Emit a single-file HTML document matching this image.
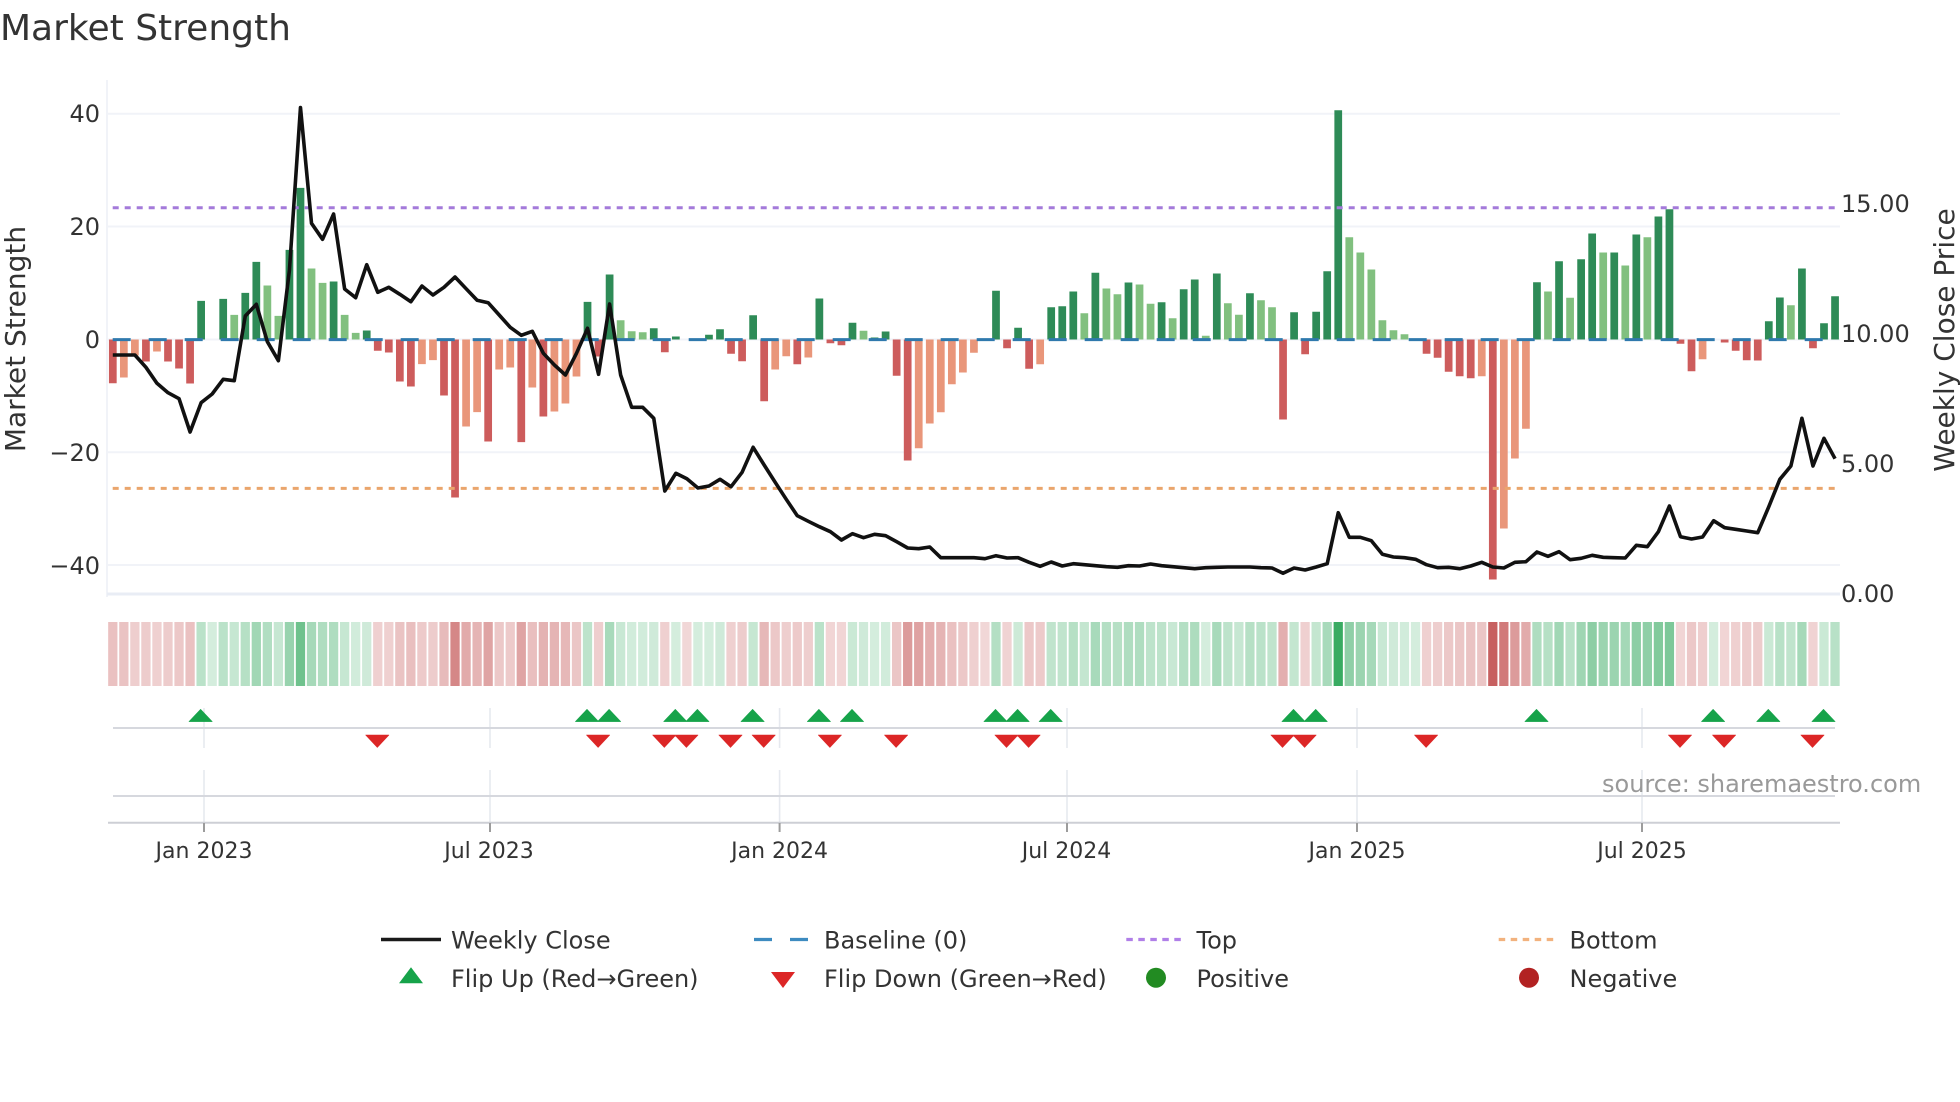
<!DOCTYPE html>
<html lang="en"><head><meta charset="utf-8"><title>Market Strength</title>
<style>
html,body{margin:0;padding:0;background:#fff}
svg{display:block}
text{font-family:"DejaVu Sans","Liberation Sans",sans-serif;fill:#333;font-size:24px}
</style></head><body>
<svg xmlns="http://www.w3.org/2000/svg" width="1960" height="1102" viewBox="0 0 1960 1102">
<rect width="1960" height="1102" fill="#fff"/>
<text x="0" y="40" style="font-size:36px">Market Strength</text>
<!-- grid -->
<g stroke="#f1f3f8" stroke-width="2" fill="none">
<path d="M107 113.7H1840M107 226.5H1840M107 339.5H1840M107 452.3H1840M107 565H1840"/>
<path d="M107 80V597"/>
</g>
<path d="M107 594H1840" stroke="#e9edf5" stroke-width="3"/>
<!-- bars -->
<g transform="translate(108.94 339.5) scale(11.04 1)">
<path fill="#2e8b57" d="M8 0h.7v-38.6h-.7zM10 0h.7v-40.6h-.7zM12 0h.7v-46.6h-.7zM13 0h.7v-77.6h-.7zM16 0h.7v-89.6h-.7zM17 0h.7v-151.6h-.7zM20 0h.7v-58h-.7zM23 0h.7v-9h-.7zM43 0h.7v-37.6h-.7zM45 0h.7v-65h-.7zM49 0h.7v-11.3h-.7zM51 0h.7v-3h-.7zM54 0h.7v-4.7h-.7zM55 0h.7v-10.3h-.7zM58 0h.7v-24.3h-.7zM64 0h.7v-41h-.7zM67 0h.7v-16.7h-.7zM69 0h.7v-2h-.7zM70 0h.7v-8h-.7zM80 0h.7v-48.7h-.7zM82 0h.7v-11.7h-.7zM85 0h.7v-32.3h-.7zM86 0h.7v-33.3h-.7zM87 0h.7v-48h-.7zM89 0h.7v-66.7h-.7zM92 0h.7v-57h-.7zM95 0h.7v-37.3h-.7zM97 0h.7v-50.3h-.7zM98 0h.7v-60h-.7zM100 0h.7v-66h-.7zM103 0h.7v-46.3h-.7zM107 0h.7v-27.3h-.7zM109 0h.7v-27.7h-.7zM110 0h.7v-68.3h-.7zM111 0h.7v-229.3h-.7zM129 0h.7v-57.3h-.7zM131 0h.7v-78.3h-.7zM133 0h.7v-80.3h-.7zM134 0h.7v-106h-.7zM136 0h.7v-87h-.7zM138 0h.7v-105h-.7zM140 0h.7v-123h-.7zM141 0h.7v-130.3h-.7zM150 0h.7v-18.3h-.7zM151 0h.7v-42h-.7zM153 0h.7v-71h-.7zM155 0h.7v-16.3h-.7zM156 0h.7v-43.3h-.7z"/>
<path fill="#81c07f" d="M11 0h.7v-24.6h-.7zM14 0h.7v-54h-.7zM15 0h.7v-23.6h-.7zM18 0h.7v-71h-.7zM19 0h.7v-56.6h-.7zM21 0h.7v-24.6h-.7zM22 0h.7v-6.6h-.7zM46 0h.7v-19.3h-.7zM47 0h.7v-8.3h-.7zM48 0h.7v-7.3h-.7zM68 0h.7v-8.7h-.7zM88 0h.7v-26.3h-.7zM90 0h.7v-51h-.7zM91 0h.7v-45.3h-.7zM93 0h.7v-55h-.7zM94 0h.7v-35.7h-.7zM96 0h.7v-21.3h-.7zM99 0h.7v-3.7h-.7zM101 0h.7v-36.3h-.7zM102 0h.7v-24.7h-.7zM104 0h.7v-39.3h-.7zM105 0h.7v-32.3h-.7zM112 0h.7v-102.3h-.7zM113 0h.7v-87h-.7zM114 0h.7v-70h-.7zM115 0h.7v-19.3h-.7zM116 0h.7v-9.3h-.7zM117 0h.7v-5.3h-.7zM130 0h.7v-48h-.7zM132 0h.7v-41.7h-.7zM135 0h.7v-87h-.7zM137 0h.7v-74h-.7zM139 0h.7v-102.3h-.7zM152 0h.7v-34.3h-.7z"/>
<path fill="#cd5c5c" d="M0 0h.7v43.7h-.7zM3 0h.7v22h-.7zM5 0h.7v22h-.7zM6 0h.7v29h-.7zM7 0h.7v44h-.7zM24 0h.7v11.3h-.7zM25 0h.7v13h-.7zM26 0h.7v42h-.7zM27 0h.7v47h-.7zM30 0h.7v56h-.7zM31 0h.7v158h-.7zM34 0h.7v102h-.7zM37 0h.7v102.6h-.7zM39 0h.7v77h-.7zM44 0h.7v17h-.7zM50 0h.7v12.7h-.7zM56 0h.7v14.3h-.7zM57 0h.7v21.7h-.7zM59 0h.7v61.7h-.7zM62 0h.7v24.7h-.7zM65 0h.7v3.7h-.7zM66 0h.7v5.7h-.7zM71 0h.7v36.3h-.7zM72 0h.7v121h-.7zM81 0h.7v8.7h-.7zM83 0h.7v29.3h-.7zM106 0h.7v80h-.7zM108 0h.7v14.7h-.7zM119 0h.7v14.3h-.7zM120 0h.7v18.3h-.7zM121 0h.7v32.3h-.7zM122 0h.7v36.7h-.7zM123 0h.7v38.7h-.7zM125 0h.7v240h-.7zM142 0h.7v4.3h-.7zM143 0h.7v31.7h-.7zM146 0h.7v3h-.7zM147 0h.7v11.3h-.7zM148 0h.7v20.7h-.7zM149 0h.7v21h-.7zM154 0h.7v8.7h-.7z"/>
<path fill="#e9967a" d="M1 0h.7v38h-.7zM2 0h.7v16h-.7zM4 0h.7v12h-.7zM28 0h.7v24.6h-.7zM29 0h.7v20.6h-.7zM32 0h.7v87h-.7zM33 0h.7v72.6h-.7zM35 0h.7v30h-.7zM36 0h.7v28h-.7zM38 0h.7v48h-.7zM40 0h.7v72h-.7zM41 0h.7v64h-.7zM42 0h.7v37h-.7zM60 0h.7v30h-.7zM61 0h.7v16.7h-.7zM63 0h.7v18h-.7zM73 0h.7v108.7h-.7zM74 0h.7v84h-.7zM75 0h.7v72.7h-.7zM76 0h.7v44.7h-.7zM77 0h.7v33h-.7zM78 0h.7v13.3h-.7zM84 0h.7v24.7h-.7zM124 0h.7v36.7h-.7zM126 0h.7v189h-.7zM127 0h.7v119h-.7zM128 0h.7v89.3h-.7zM144 0h.7v19.7h-.7z"/>
</g>
<!-- dashed lines -->
<path d="M112.7 339.6H1835" stroke="#2f79ad" stroke-width="3" stroke-dasharray="18 18" fill="none"/>
<path d="M112.7 207.7H1835" stroke="#a47ada" stroke-width="3" stroke-dasharray="6 6" fill="none"/>
<path d="M112.7 488.4H1835" stroke="#eaa56c" stroke-width="3" stroke-dasharray="6 6" fill="none"/>
<!-- price -->
<g transform="translate(112.8 0) scale(11.04 1)">
<polyline vector-effect="non-scaling-stroke" fill="none" stroke="#111" stroke-width="3.6" stroke-linejoin="round" points="0,355 1,355 2,355 3,367.3 4,383.3 5,392.7 6,398.7 7,432 8,402.7 9,394 10,379.3 11,380.7 12,316 13,304.3 14,341.7 15,360.7 16,270 17,107.5 18,223.3 19,239.3 20,214 21,289 22,297.7 23,264.7 24,292.3 25,287.3 26,294.3 27,301.7 28,286 29,295 30,287.3 31,277 32,288.7 33,300.3 34,302.7 35,315 36,327.3 37,335.3 38,331.3 39,353.3 40,365 41,375 42,353.3 43,328.3 44,374.3 45,304 46,375 47,407.3 48,407.3 49,418.3 50,491 51,473.3 52,478.7 53,488 54,486 55,479.3 56,486.7 57,472.3 58,447.3 59,465 60,482.3 61,499.3 62,515.7 63,521.3 64,526.7 65,531.7 66,540 67,533.7 68,537.7 69,534.3 70,535.7 71,541.7 72,548 73,548.7 74,547 75,557.7 76,557.7 77,557.7 78,557.7 79,558.7 80,555.7 81,558 82,557.7 83,562.3 84,566.3 85,562 86,566 87,563.7 88,564.7 89,565.7 90,566.7 91,567.3 92,565.7 93,566 94,564 95,565.7 96,566.7 97,567.7 98,568.7 99,567.7 100,567.3 101,567 102,567 103,567 104,567.7 105,568 106,573.3 107,568 108,570 109,567 110,563.7 111,512.7 112,537.3 113,537.3 114,540.7 115,554.3 116,557 117,557.7 118,559.3 119,564.7 120,567.7 121,567.3 122,568.7 123,566 124,562.3 125,567 126,568 127,562.3 128,561.7 129,552 130,556.3 131,551.7 132,559.7 133,558.3 134,555.3 135,557.3 136,557.7 137,558 138,545.3 139,546.7 140,531.7 141,506 142,536.7 143,539 144,537 145,520.7 146,527.7 147,529.3 148,531 149,532.7 150,506.7 151,479.3 152,466 153,418.3 154,466 155,438.3 156,458.7"/>
</g>
<!-- axis text -->
<text x="100" y="122" text-anchor="end">40</text>
<text x="100" y="235" text-anchor="end">20</text>
<text x="100" y="348" text-anchor="end">0</text>
<text x="100" y="461" text-anchor="end">−20</text>
<text x="100" y="574" text-anchor="end">−40</text>
<text x="1841" y="212">15.00</text>
<text x="1841" y="342">10.00</text>
<text x="1841" y="472">5.00</text>
<text x="1841" y="602">0.00</text>
<text transform="translate(25 339) rotate(-90)" text-anchor="middle" style="font-size:28px">Market Strength</text>
<text transform="translate(1954 340) rotate(-90)" text-anchor="middle" style="font-size:28px">Weekly Close Price</text>
<!-- heat strip -->
<g transform="translate(108.16 0) scale(11.04 1)">
<g fill="#1b9e4b">
<path fill-opacity=".3" d="M8 622h.84v64h-.84z"/><path fill-opacity=".19" d="M9 622h.84v64h-.84z"/><path fill-opacity=".3" d="M10 622h.84v64h-.84z"/><path fill-opacity=".25" d="M11 622h.84v64h-.84z"/><path fill-opacity=".32" d="M12 622h.84v64h-.84z"/><path fill-opacity=".41" d="M13 622h.84v64h-.84z"/><path fill-opacity=".34" d="M14 622h.84v64h-.84z"/><path fill-opacity=".25" d="M15 622h.84v64h-.84z"/><path fill-opacity=".45" d="M16 622h.84v64h-.84z"/><path fill-opacity=".63" d="M17 622h.84v64h-.84z"/><path fill-opacity=".39" d="M18 622h.84v64h-.84z"/><path fill-opacity=".35" d="M19 622h.84v64h-.84z"/><path fill-opacity=".35" d="M20 622h.84v64h-.84z"/><path fill-opacity=".25" d="M21 622h.84v64h-.84z"/><path fill-opacity=".2" d="M22 622h.84v64h-.84z"/><path fill-opacity=".21" d="M23 622h.84v64h-.84z"/>
<path fill-opacity=".29" d="M43 622h.84v64h-.84z"/><path fill-opacity=".38" d="M45 622h.84v64h-.84z"/><path fill-opacity=".24" d="M46 622h.84v64h-.84z"/><path fill-opacity=".2" d="M47 622h.84v64h-.84z"/><path fill-opacity=".2" d="M48 622h.84v64h-.84z"/><path fill-opacity=".21" d="M49 622h.84v64h-.84z"/><path fill-opacity=".19" d="M51 622h.84v64h-.84z"/><path fill-opacity=".19" d="M53 622h.84v64h-.84z"/><path fill-opacity=".19" d="M54 622h.84v64h-.84z"/><path fill-opacity=".21" d="M55 622h.84v64h-.84z"/><path fill-opacity=".25" d="M58 622h.84v64h-.84z"/><path fill-opacity=".3" d="M64 622h.84v64h-.84z"/><path fill-opacity=".23" d="M67 622h.84v64h-.84z"/><path fill-opacity=".21" d="M68 622h.84v64h-.84z"/><path fill-opacity=".19" d="M69 622h.84v64h-.84z"/><path fill-opacity=".2" d="M70 622h.84v64h-.84z"/>
<path fill-opacity=".33" d="M80 622h.84v64h-.84z"/><path fill-opacity=".22" d="M82 622h.84v64h-.84z"/><path fill-opacity=".28" d="M85 622h.84v64h-.84z"/><path fill-opacity=".28" d="M86 622h.84v64h-.84z"/><path fill-opacity=".32" d="M87 622h.84v64h-.84z"/><path fill-opacity=".26" d="M88 622h.84v64h-.84z"/><path fill-opacity=".38" d="M89 622h.84v64h-.84z"/><path fill-opacity=".33" d="M90 622h.84v64h-.84z"/><path fill-opacity=".32" d="M91 622h.84v64h-.84z"/><path fill-opacity=".35" d="M92 622h.84v64h-.84z"/><path fill-opacity=".35" d="M93 622h.84v64h-.84z"/><path fill-opacity=".29" d="M94 622h.84v64h-.84z"/><path fill-opacity=".29" d="M95 622h.84v64h-.84z"/><path fill-opacity=".24" d="M96 622h.84v64h-.84z"/><path fill-opacity=".33" d="M97 622h.84v64h-.84z"/><path fill-opacity=".36" d="M98 622h.84v64h-.84z"/><path fill-opacity=".19" d="M99 622h.84v64h-.84z"/><path fill-opacity=".38" d="M100 622h.84v64h-.84z"/><path fill-opacity=".29" d="M101 622h.84v64h-.84z"/><path fill-opacity=".25" d="M102 622h.84v64h-.84z"/><path fill-opacity=".32" d="M103 622h.84v64h-.84z"/><path fill-opacity=".3" d="M104 622h.84v64h-.84z"/><path fill-opacity=".28" d="M105 622h.84v64h-.84z"/>
<path fill-opacity=".26" d="M107 622h.84v64h-.84z"/><path fill-opacity=".26" d="M109 622h.84v64h-.84z"/><path fill-opacity=".38" d="M110 622h.84v64h-.84z"/><path fill-opacity=".87" d="M111 622h.84v64h-.84z"/><path fill-opacity=".49" d="M112 622h.84v64h-.84z"/><path fill-opacity=".44" d="M113 622h.84v64h-.84z"/><path fill-opacity=".39" d="M114 622h.84v64h-.84z"/><path fill-opacity=".24" d="M115 622h.84v64h-.84z"/><path fill-opacity=".21" d="M116 622h.84v64h-.84z"/><path fill-opacity=".2" d="M117 622h.84v64h-.84z"/><path fill-opacity=".19" d="M118 622h.84v64h-.84z"/>
<path fill-opacity=".35" d="M129 622h.84v64h-.84z"/><path fill-opacity=".32" d="M130 622h.84v64h-.84z"/><path fill-opacity=".41" d="M131 622h.84v64h-.84z"/><path fill-opacity=".31" d="M132 622h.84v64h-.84z"/><path fill-opacity=".42" d="M133 622h.84v64h-.84z"/><path fill-opacity=".5" d="M134 622h.84v64h-.84z"/><path fill-opacity=".44" d="M135 622h.84v64h-.84z"/><path fill-opacity=".44" d="M136 622h.84v64h-.84z"/><path fill-opacity=".4" d="M137 622h.84v64h-.84z"/><path fill-opacity=".5" d="M138 622h.84v64h-.84z"/><path fill-opacity=".49" d="M139 622h.84v64h-.84z"/><path fill-opacity=".55" d="M140 622h.84v64h-.84z"/><path fill-opacity=".57" d="M141 622h.84v64h-.84z"/>
<path fill-opacity=".19" d="M145 622h.84v64h-.84z"/><path fill-opacity=".23" d="M150 622h.84v64h-.84z"/><path fill-opacity=".31" d="M151 622h.84v64h-.84z"/><path fill-opacity=".28" d="M152 622h.84v64h-.84z"/><path fill-opacity=".39" d="M153 622h.84v64h-.84z"/><path fill-opacity=".23" d="M155 622h.84v64h-.84z"/><path fill-opacity=".31" d="M156 622h.84v64h-.84z"/>
</g>
<g fill="#b22222">
<path fill-opacity=".28" d="M0 622h.84v64h-.84z"/><path fill-opacity=".27" d="M1 622h.84v64h-.84z"/><path fill-opacity=".22" d="M2 622h.84v64h-.84z"/><path fill-opacity=".23" d="M3 622h.84v64h-.84z"/><path fill-opacity=".21" d="M4 622h.84v64h-.84z"/><path fill-opacity=".23" d="M5 622h.84v64h-.84z"/><path fill-opacity=".25" d="M6 622h.84v64h-.84z"/><path fill-opacity=".28" d="M7 622h.84v64h-.84z"/>
<path fill-opacity=".21" d="M24 622h.84v64h-.84z"/><path fill-opacity=".21" d="M25 622h.84v64h-.84z"/><path fill-opacity=".27" d="M26 622h.84v64h-.84z"/><path fill-opacity=".29" d="M27 622h.84v64h-.84z"/><path fill-opacity=".24" d="M28 622h.84v64h-.84z"/><path fill-opacity=".23" d="M29 622h.84v64h-.84z"/><path fill-opacity=".31" d="M30 622h.84v64h-.84z"/><path fill-opacity=".54" d="M31 622h.84v64h-.84z"/><path fill-opacity=".38" d="M32 622h.84v64h-.84z"/><path fill-opacity=".34" d="M33 622h.84v64h-.84z"/><path fill-opacity=".41" d="M34 622h.84v64h-.84z"/><path fill-opacity=".25" d="M35 622h.84v64h-.84z"/><path fill-opacity=".24" d="M36 622h.84v64h-.84z"/><path fill-opacity=".41" d="M37 622h.84v64h-.84z"/><path fill-opacity=".29" d="M38 622h.84v64h-.84z"/><path fill-opacity=".35" d="M39 622h.84v64h-.84z"/><path fill-opacity=".34" d="M40 622h.84v64h-.84z"/><path fill-opacity=".32" d="M41 622h.84v64h-.84z"/><path fill-opacity=".26" d="M42 622h.84v64h-.84z"/>
<path fill-opacity=".22" d="M44 622h.84v64h-.84z"/><path fill-opacity=".21" d="M50 622h.84v64h-.84z"/><path fill-opacity=".18" d="M52 622h.84v64h-.84z"/><path fill-opacity=".21" d="M56 622h.84v64h-.84z"/><path fill-opacity=".23" d="M57 622h.84v64h-.84z"/><path fill-opacity=".32" d="M59 622h.84v64h-.84z"/><path fill-opacity=".25" d="M60 622h.84v64h-.84z"/><path fill-opacity=".22" d="M61 622h.84v64h-.84z"/><path fill-opacity=".24" d="M62 622h.84v64h-.84z"/><path fill-opacity=".22" d="M63 622h.84v64h-.84z"/><path fill-opacity=".19" d="M65 622h.84v64h-.84z"/><path fill-opacity=".19" d="M66 622h.84v64h-.84z"/>
<path fill-opacity=".26" d="M71 622h.84v64h-.84z"/><path fill-opacity=".45" d="M72 622h.84v64h-.84z"/><path fill-opacity=".42" d="M73 622h.84v64h-.84z"/><path fill-opacity=".37" d="M74 622h.84v64h-.84z"/><path fill-opacity=".34" d="M75 622h.84v64h-.84z"/><path fill-opacity=".28" d="M76 622h.84v64h-.84z"/><path fill-opacity=".25" d="M77 622h.84v64h-.84z"/><path fill-opacity=".21" d="M78 622h.84v64h-.84z"/><path fill-opacity=".18" d="M79 622h.84v64h-.84z"/><path fill-opacity=".2" d="M81 622h.84v64h-.84z"/><path fill-opacity=".25" d="M83 622h.84v64h-.84z"/><path fill-opacity=".24" d="M84 622h.84v64h-.84z"/>
<path fill-opacity=".36" d="M106 622h.84v64h-.84z"/><path fill-opacity=".21" d="M108 622h.84v64h-.84z"/><path fill-opacity=".21" d="M119 622h.84v64h-.84z"/><path fill-opacity=".22" d="M120 622h.84v64h-.84z"/><path fill-opacity=".25" d="M121 622h.84v64h-.84z"/><path fill-opacity=".26" d="M122 622h.84v64h-.84z"/><path fill-opacity=".27" d="M123 622h.84v64h-.84z"/><path fill-opacity=".26" d="M124 622h.84v64h-.84z"/><path fill-opacity=".72" d="M125 622h.84v64h-.84z"/><path fill-opacity=".6" d="M126 622h.84v64h-.84z"/><path fill-opacity=".45" d="M127 622h.84v64h-.84z"/><path fill-opacity=".38" d="M128 622h.84v64h-.84z"/>
<path fill-opacity=".19" d="M142 622h.84v64h-.84z"/><path fill-opacity=".25" d="M143 622h.84v64h-.84z"/><path fill-opacity=".22" d="M144 622h.84v64h-.84z"/><path fill-opacity=".19" d="M146 622h.84v64h-.84z"/><path fill-opacity=".21" d="M147 622h.84v64h-.84z"/><path fill-opacity=".23" d="M148 622h.84v64h-.84z"/><path fill-opacity=".23" d="M149 622h.84v64h-.84z"/><path fill-opacity=".2" d="M154 622h.84v64h-.84z"/>
</g>
</g>
<!-- lower panel -->
<g stroke="#e6e9ef" stroke-width="1.6" fill="none">
<path d="M204 708V748M204 770V823M490 708V748M490 770V823M779.6 708V748M779.6 770V823M1067 708V748M1067 770V823M1357 708V748M1357 770V823M1642 708V748M1642 770V823"/>
</g>
<path d="M113 728H1835M113 796H1835" stroke="#d6d8de" stroke-width="2" fill="none"/>
<path d="M108 822.7H1840" stroke="#cdcfd5" stroke-width="2" fill="none"/>
<path d="M204 823V832M490 823V832M779.6 823V832M1067 823V832M1357 823V832M1642 823V832" stroke="#9c9c9c" stroke-width="2" fill="none"/>
<path fill="#16a34a" stroke="#16a34a" stroke-width=".6" stroke-linejoin="round" d="M200.6 709.3l11.6 12.3h-23.2zM587 709.3l11.6 12.3h-23.2zM609.1 709.3l11.6 12.3h-23.2zM675.3 709.3l11.6 12.3h-23.2zM697.4 709.3l11.6 12.3h-23.2zM752.6 709.3l11.6 12.3h-23.2zM818.9 709.3l11.6 12.3h-23.2zM852 709.3l11.6 12.3h-23.2zM995.5 709.3l11.6 12.3h-23.2zM1017.6 709.3l11.6 12.3h-23.2zM1050.7 709.3l11.6 12.3h-23.2zM1293.5 709.3l11.6 12.3h-23.2zM1315.7 709.3l11.6 12.3h-23.2zM1536.5 709.3l11.6 12.3h-23.2zM1713.1 709.3l11.6 12.3h-23.2zM1768.3 709.3l11.6 12.3h-23.2zM1823.5 709.3l11.6 12.3h-23.2z"/>
<path fill="#dc2626" stroke="#dc2626" stroke-width=".6" stroke-linejoin="round" d="M377.3 747.4l-11.6-12.4h23.2zM598.1 747.4l-11.6-12.4h23.2zM664.3 747.4l-11.6-12.4h23.2zM686.4 747.4l-11.6-12.4h23.2zM730.5 747.4l-11.6-12.4h23.2zM763.7 747.4l-11.6-12.4h23.2zM829.9 747.4l-11.6-12.4h23.2zM896.1 747.4l-11.6-12.4h23.2zM1006.5 747.4l-11.6-12.4h23.2zM1028.6 747.4l-11.6-12.4h23.2zM1282.5 747.4l-11.6-12.4h23.2zM1304.6 747.4l-11.6-12.4h23.2zM1426.1 747.4l-11.6-12.4h23.2zM1680 747.4l-11.6-12.4h23.2zM1724.1 747.4l-11.6-12.4h23.2zM1812.5 747.4l-11.6-12.4h23.2z"/>
<g text-anchor="middle">
<text x="204" y="858" style="font-size:22px">Jan 2023</text>
<text x="489" y="858" style="font-size:22px">Jul 2023</text>
<text x="779.6" y="858" style="font-size:22px">Jan 2024</text>
<text x="1066.5" y="858" style="font-size:22px">Jul 2024</text>
<text x="1357" y="858" style="font-size:22px">Jan 2025</text>
<text x="1642" y="858" style="font-size:22px">Jul 2025</text>
</g>
<text x="1602" y="792" style="fill:#999">source: sharemaestro.com</text>
<!-- legend -->
<path d="M381 939.5H441" stroke="#1a1a1a" stroke-width="3.5" fill="none"/>
<path d="M754 939.5H772M790 939.5H808" stroke="#3d8bc0" stroke-width="3.2" fill="none"/>
<path d="M1126.3 939.5H1181" stroke="#b07fe8" stroke-width="3.2" stroke-dasharray="6.5 5.5" fill="none"/>
<path d="M1498.7 939.5H1554" stroke="#f2b27e" stroke-width="3.2" stroke-dasharray="6.5 5.5" fill="none"/>
<path d="M411 967.3l12 16h-24z" fill="#16a34a"/>
<path d="M783 988l-12-16h24z" fill="#dc2626"/>
<circle cx="1156" cy="977.7" r="10" fill="#228b22"/>
<circle cx="1529" cy="977.7" r="10" fill="#b22222"/>
<text x="451" y="948.3">Weekly Close</text>
<text x="824" y="948.3">Baseline (0)</text>
<text x="1196.5" y="948.3">Top</text>
<text x="1569.5" y="948.3">Bottom</text>
<text x="451" y="987">Flip Up (Red→Green)</text>
<text x="824" y="987">Flip Down (Green→Red)</text>
<text x="1196.5" y="987">Positive</text>
<text x="1569.5" y="987">Negative</text>
</svg>
</body></html>
